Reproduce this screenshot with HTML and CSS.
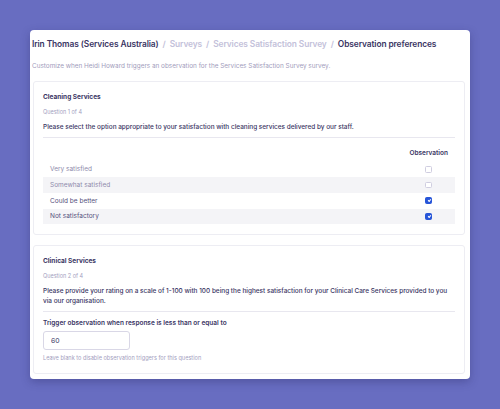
FILE: index.html
```html
<!DOCTYPE html>
<html lang="en">
<head>
  <meta charset="UTF-8" />
  <meta name="viewport" content="width=device-width, initial-scale=1" />
  <title>Observation preferences</title>
  <link rel="stylesheet" href="styles.css">
</head>
<body>

  <div class="panel">
    <h1 class="crumbs">
      <span class="crumb-current">Irin Thomas (Services Australia)</span>
      <span class="sep">/</span>
      <span class="crumb">Surveys</span>
      <span class="sep">/</span>
      <span class="crumb">Services Satisfaction Survey</span>
      <span class="sep">/</span>
      <span class="crumb-current">Observation preferences</span>
    </h1>
    <p class="intro">Customize when Heidi Howard triggers an observation for the Services Satisfaction Survey survey.</p>

    <!-- multiple choice question -->
    <div class="card">
      <h3 class="q-title">Cleaning Services</h3>
      <p class="q-count">Question 1 of 4</p>
      <p class="q-text">Please select the option appropriate to your satisfaction with cleaning services delivered by our staff.</p>

      <div class="options">
        <div class="opt-head">
          <span></span>
          <span class="col-title">Observation</span>
        </div>
        <div class="opt">
          <span>Very satisfied</span>
          <span class="check"></span>
        </div>
        <div class="opt alt">
          <span>Somewhat satisfied</span>
          <span class="check"></span>
        </div>
        <div class="opt on">
          <span>Could be better</span>
          <span class="check checked"></span>
        </div>
        <div class="opt alt on">
          <span>Not satisfactory</span>
          <span class="check checked"></span>
        </div>
      </div>
    </div>

    <!-- numeric question -->
    <div class="card">
      <h3 class="q-title">Clinical Services</h3>
      <p class="q-count">Question 2 of 4</p>
      <p class="q-text">Please provide your rating on a scale of 1-100 with 100 being the highest satisfaction for your Clinical Care Services provided to you via our organisation.</p>

      <label class="trigger-label" for="threshold">Trigger observation when response is less than or equal to</label>
      <input class="trigger-input" type="text" id="threshold" value="60" />
      <p class="hint">Leave blank to disable observation triggers for this question</p>
    </div>
  </div>

</body>
</html>
```

FILE: styles.css
```css
* {
  box-sizing: border-box;
}
body {
  margin: 0;
  background: #686dc1;
  font-family: Inter, 'Noto Sans', sans-serif;
  color: #3a3563;
  height: 409px;
  overflow: hidden;
}
.panel {
  width: 440px;
  margin: 30px 0 0 30px;
  background: white;
  border-radius: 4px;
  box-shadow: 0 3px 8px rgba(40, 40, 100, 0.35);
  padding: 8px 5px 5px 3px;
}
.crumbs {
  margin: 0 0 0 -1px;
  font-size: 8.4px;
  line-height: 12px;
  font-weight: 600;
  letter-spacing: -0.1px;
  white-space: nowrap;
}
.crumb-current {
  color: #3a3563;
}
.crumb,
.sep {
  color: #c3c1da;
}
.sep {
  margin: 0 2px;
}
.intro {
  margin: 11.5px 0 10.5px -1px;
  font-size: 6.4px;
  line-height: 9px;
  color: #9f9cbc;
}
.card {
  border: 1px solid #ededf3;
  border-radius: 3px;
  padding: 10.5px 9px 10px 9px;
}
.card + .card {
  margin-top: 10px;
}
.q-title {
  margin: 0;
  font-size: 6.5px;
  line-height: 9px;
  font-weight: 700;
}
.q-count {
  margin: 6px 0 0;
  font-size: 5.5px;
  line-height: 9px;
  color: #a3a0c0;
}
.q-text {
  margin: 5px 0 0;
  font-size: 6.45px;
  line-height: 10px;
  font-weight: 500;
  padding-bottom: 5px;
  border-bottom: 1px solid #e8e7ef;
}
.options {
  margin-top: 10.5px;
}
.opt-head,
.opt {
  display: grid;
  grid-template-columns: 1fr 39px;
  align-items: center;
  padding: 0 7px;
}
.opt-head {
  height: 9px;
  margin-bottom: 4.5px;
}
.col-title {
  font-size: 6.5px;
  font-weight: 600;
  text-align: right;
  white-space: nowrap;
}
.opt {
  height: 15.7px;
  font-size: 6.5px;
  color: #8e8bab;
}
.opt.on {
  color: #544f7c;
}
.opt.alt {
  background: #f4f4f7;
}
.check {
  justify-self: center;
  width: 6.5px;
  height: 6.5px;
  border: 1px solid #cfcde0;
  border-radius: 1.5px;
  background: white;
  position: relative;
}
.check.checked {
  background: #2755d8;
  border-color: #2755d8;
}
.check.checked::after {
  content: "";
  position: absolute;
  left: 1.3px;
  top: 0.6px;
  width: 2.4px;
  height: 1.2px;
  border-left: 1px solid white;
  border-bottom: 1px solid white;
  transform: rotate(-45deg);
}
.trigger-label {
  display: block;
  margin-top: 6.8px;
  font-size: 6.5px;
  line-height: 9px;
  font-weight: 600;
}
.trigger-input {
  display: block;
  margin-top: 3px;
  width: 87px;
  height: 19px;
  padding: 0 7px;
  border: 1px solid #d9d7e6;
  border-radius: 3px;
  font-family: inherit;
  font-size: 6.8px;
  color: #3a3563;
  outline: none;
}
.hint {
  margin: 4px 0 0;
  font-size: 5.6px;
  line-height: 9px;
  color: #a3a0c0;
}
```
